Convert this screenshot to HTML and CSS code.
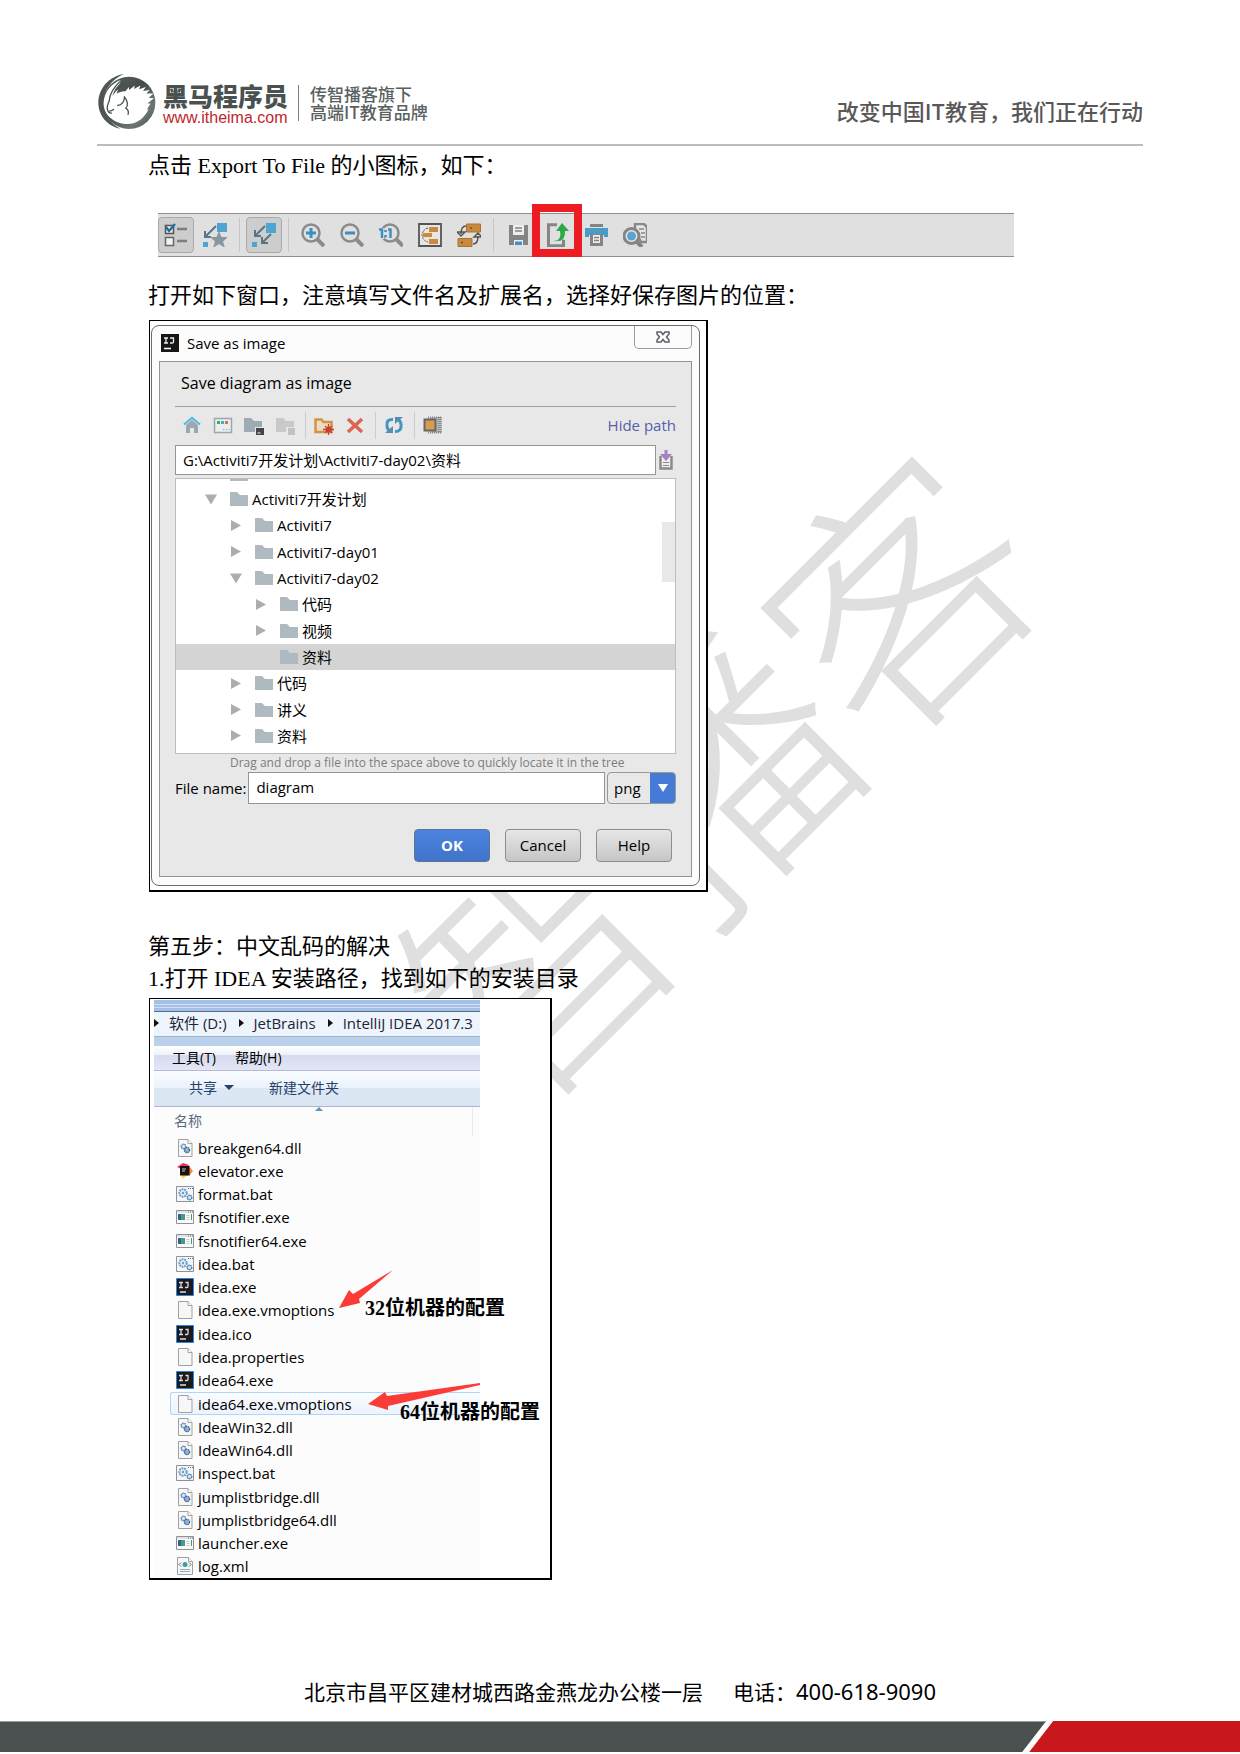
FILE: index.html
```html
<!DOCTYPE html>
<html lang="zh-CN">
<head>
<meta charset="utf-8">
<meta name="viewport" content="width=device-width, initial-scale=1">
<title>Activiti7 讲义</title>
<link rel="stylesheet" href="styles.css">
</head>
<body>
<svg class="sprite" aria-hidden="true">
  <symbol id="folder" viewBox="0 0 18 14"><path d="M0 0h7l3 3h8v11H0z" fill="#aeb9c0"/></symbol>
  <symbol id="right" viewBox="0 0 10 11"><path d="M0 0l10 5.500L0 11z" fill="#adadad"/></symbol>
  <symbol id="down" viewBox="0 0 12 10"><path d="M0 0h12L6 10z" fill="#adadad"/></symbol>
  <symbol id="f-page" viewBox="0 0 18 18"><path d="M2.500.5h9.500l4 4v13H2.500z" fill="#f7f7f7" stroke="#a0a0a0"/><path d="M12 .5v4h4" fill="#fff" stroke="#a0a0a0"/></symbol>
  <symbol id="f-dll" viewBox="0 0 18 18"><path d="M2.500.5h9.500l4 4v13H2.500z" fill="#f7f7f7" stroke="#a0a0a0"/><path d="M12 .5v4h4" fill="#fff" stroke="#a0a0a0"/><circle cx="7.500" cy="7.500" r="2.300" fill="#d5e6f5" stroke="#5b84ae" stroke-width="1.500" stroke-dasharray="1.500 .6"/><circle cx="11" cy="11" r="2.600" fill="#8fb3d6" stroke="#3e6b9c" stroke-width="1.300" stroke-dasharray="1.500 .6"/></symbol>
  <symbol id="f-bat" viewBox="0 0 18 18"><path d="M.5 1.500h17v15H.5z" fill="#f4f6f8" stroke="#8c9298"/><path d="M12 3.500h5" stroke="#666" stroke-dasharray="1 1"/><circle cx="7" cy="8" r="3.700" fill="#e4f0f8" stroke="#6d9cc4" stroke-width="2" stroke-dasharray="1.800 .8"/><circle cx="7" cy="8" r="1.200" fill="#6d9cc4"/><circle cx="13.500" cy="12.500" r="2.300" fill="#d3e6f5" stroke="#4878a8" stroke-width="1.400" stroke-dasharray="1.500 .6"/></symbol>
  <symbol id="f-app" viewBox="0 0 18 18"><path d="M.5 2.500h17v13H.5z" fill="#fafafa" stroke="#8c9298"/><path d="M1 4h16" stroke="#dfe4e8" stroke-width="2"/><path d="M12 4h5" stroke="#667" stroke-dasharray="1 1"/><path d="M2 6h7v6H2z" fill="#4a9a80"/><path d="M2 6h3v6H2z" fill="#35658f"/><path d="M10.500 7.500h3M10.500 9.500h3M10.500 11.500h3" stroke="#c5c9cc"/><path d="M15.500 6v6" stroke="#4a9a5a"/></symbol>
  <symbol id="f-ij" viewBox="0 0 18 18"><path d="M.5.5h17v17H.5z" fill="#1b1b1d" stroke="#2e83e6"/><path d="M3 4.500h4M3 9.500h4M5 4.500v5M9.500 4.500H12v4q0 1-1 1H9" fill="none" stroke="#ddd" stroke-width="1.300"/><path d="M4 14h6" stroke="#fff" stroke-width="1.300"/></symbol>
  <symbol id="f-elev" viewBox="0 0 18 18"><path d="M1 5l6-4 6 2-3 6z" fill="#ef2f5f"/><path d="M13 4l4 5-4 5z" fill="#f58a3c"/><path d="M5 10l7 3-6 4z" fill="#f6dc3a"/><path d="M4 4h9.500v9.500H4z" fill="#17110f"/><path d="M6 7h4M6 9h3" stroke="#c9c2bd"/></symbol>
  <symbol id="f-xml" viewBox="0 0 18 18"><path d="M1.500.5h11l4 4v13h-15z" fill="#f7f7f7" stroke="#a0a0a0"/><path d="M12.500.5v4h4" fill="#fff" stroke="#a0a0a0"/><circle cx="9" cy="7.500" r="2.500" fill="#3aa09e"/><path d="M5 5.500l-2 2 2 2M13 5.500l2 2-2 2" fill="none" stroke="#666"/><path d="M4 12.500h10M4 14.500h10" stroke="#9ab"/></symbol>
</svg>

<div class="page">
  <div class="watermark" aria-hidden="true">传智播客</div>

  <header class="page-header">
    <div class="brand">
      <svg class="brand-mark" viewBox="24 38 182 172" aria-hidden="true">
        <defs><linearGradient id="ring" x1="0" y1="0" x2="1" y2="1"><stop offset="0" stop-color="#5b6463"/><stop offset=".45" stop-color="#434b4b"/><stop offset=".75" stop-color="#6d7776"/><stop offset="1" stop-color="#444c4c"/></linearGradient></defs>
        <circle cx="120" cy="128" r="79" fill="url(#ring)"/>
        <path d="M104 41C60 48 27 84 27 128c0 40 30 72 66 78-30-16-50-44-50-78 0-40 24-70 61-87z" fill="#4d5655"/>
        <path d="M96 58C68 68 45 94 43 126c-2 34 26 62 66 66 34 2 58-18 70-46l-6 4c4-8 8-14 12-20l-10 0 20-16-16-1 15-13-22 0 10-11-20 3 8-12-20 7 4-11-19 10 2-10-17 13-1-9-10 13C88 92 74 104 68 118c-4 11-3 18-9 27-3 5 0 10 6 8M96 58C78 74 62 96 60 118c-1 10-6 20-7 26" fill="#fff"/>
        <path d="M97 60C74 80 61 98 60 122c-4 10-8 16-6 24 2 10 6 14 14 13M60 152c6 2 10-2 14-5M84 136c14-1 22-12 22-28M106 110c10 14 12 26 4 34 8 6 10 12 6 20" fill="none" stroke="#4a5352" stroke-width="4"/>
        <path d="M104 62C84 74 72 92 70 108c8-16 20-24 34-30z" fill="#4a5352"/>
      </svg>
      <div class="brand-text">
        <strong class="brand-name">黑马程序员</strong>
        <a class="brand-url" href="#">www.itheima.com</a>
      </div>
      <p class="brand-tag">传智播客旗下<br>高端IT教育品牌</p>
    </div>
    <p class="slogan">改变中国IT教育，我们正在行动</p>
  </header>

  <main class="content">
    <p>点击 Export To File 的小图标，如下：</p>

    <div class="diagram-bar" role="toolbar" aria-label="Diagram">
      <button class="tool pressed" type="button" aria-label="Categories"><svg viewBox="0 0 24 24"><path d="M1.500 2.500h8v8h-8z" fill="#e8e8e8" stroke="#555" stroke-width="1.500"/><path d="M2 4l3 4 6-7" fill="none" stroke="#1f6c9c" stroke-width="2.200"/><path d="M1.500 14.500h8v8h-8z" fill="#f2f2f2" stroke="#666" stroke-width="1.500"/><path d="M13 6h10M13 18h10" stroke="#7d7d7d" stroke-width="2.500"/></svg></button>
      <button class="tool" type="button" aria-label="Visibility"><svg viewBox="0 0 24 24"><path d="M14 0h10v9H14zM0 19h5v5H0z" fill="#4ea5cf"/><path d="M13 3L3 13M2 8v6h6" fill="none" stroke="#5b7488" stroke-width="2"/><path d="M16 8l2.500 6H25l-5 4.500 2 6.500-6-4-6 4 2-6.500L7 14h6.500z" fill="#8696a3"/></svg></button>
      <span class="tool-sep"></span>
      <button class="tool pressed" type="button" aria-label="Dependencies"><svg viewBox="0 0 24 24"><path d="M14 0h10v10H14zM0 19h5v5H0z" fill="#4ea5cf"/><path d="M13 3L4 12M3 7v6h6M19 11l-8 8M10 14v6h6" fill="none" stroke="#5b7488" stroke-width="2"/></svg></button>
      <span class="tool-sep"></span>
      <button class="tool" type="button" aria-label="Zoom in"><svg viewBox="0 0 24 24"><circle cx="10" cy="10" r="8.500" fill="none" stroke="#8b8b8b" stroke-width="2.500"/><path d="M16 16l7 7" stroke="#8b8b8b" stroke-width="4"/><path d="M10 5v10M5 10h10" stroke="#3c8fc0" stroke-width="3"/></svg></button>
      <button class="tool" type="button" aria-label="Zoom out"><svg viewBox="0 0 24 24"><circle cx="10" cy="10" r="8.500" fill="none" stroke="#8b8b8b" stroke-width="2.500"/><path d="M16 16l7 7" stroke="#8b8b8b" stroke-width="4"/><path d="M5 10h10" stroke="#3c8fc0" stroke-width="3"/></svg></button>
      <button class="tool" type="button" aria-label="Actual size"><svg viewBox="0 0 24 24"><circle cx="11" cy="10" r="8.500" fill="none" stroke="#8b8b8b" stroke-width="2.500"/><path d="M17 16l7 7" stroke="#8b8b8b" stroke-width="4"/><path d="M0 5h5v11H0zM6 5h8v11H6z" fill="#e0e0e0"/><path d="M0 6.500h3V15M9 6.500h2.500V15M6.500 7v2M6.500 12v2.500" fill="none" stroke="#3c8fc0" stroke-width="2.500"/></svg></button>
      <button class="tool" type="button" aria-label="Fit content"><svg viewBox="0 0 24 24"><path d="M1 1h22v22H1z" fill="#e6e6e6" stroke="#555" stroke-width="1.800"/><path d="M11 4h9v5h-9zM5 10h9v4H5zM11 16h9v5h-9z" fill="#c98a3c"/><path d="M10 5Q5 6 4 12q1 6 6 7" fill="none" stroke="#555" stroke-dasharray="2 1"/></svg></button>
      <button class="tool" type="button" aria-label="Apply layout"><svg viewBox="0 0 24 24"><path d="M9.500 1h14v8h-14zM1 15.500h14v8H1z" fill="#c98a3c" stroke="#a87434"/><path d="M9 3Q4 3 4 11M0 9h8l-4 4zM16 21q5 0 5-8M17 14h8l-4-4z" fill="none" stroke="#555" stroke-width="1.500"/><path d="M13 5h2M4 19.500h2" stroke="#555" stroke-width="1.500"/></svg></button>
      <span class="tool-sep"></span>
      <button class="tool" type="button" aria-label="Save"><svg viewBox="0 0 24 24"><path d="M3 2h19v20H3z" fill="#848484"/><path d="M7 2h11v10H7z" fill="#eee"/><path d="M9 5h7M9 8h7" stroke="#848484" stroke-width="1.500"/><path d="M8 17h9v5H8z" fill="#eee"/><path d="M9 18.500h7V22H9z" fill="#3f93c4"/></svg></button>
      <button class="tool marked" type="button" aria-label="Export to file"><svg viewBox="0 0 24 24"><path d="M12 1.800H3.500v21h15v-6" fill="none" stroke="#858585" stroke-width="3"/><path d="M8 18q9 0 7-10h-4l6-8 7 8h-4q1 12-12 10z" fill="#2fa84a"/></svg></button>
      <button class="tool" type="button" aria-label="Print"><svg viewBox="0 0 24 24"><path d="M6 1h13v3H6z" fill="#848484"/><path d="M1 5h23v9h-4v-2H5v2H1z" fill="#4a9cc8"/><path d="M6 11h13v12H6z" fill="#848484"/><path d="M9 12h7v8H9z" fill="#eee"/><path d="M10 14.500h5M10 17.500h5" stroke="#848484" stroke-width="1.500"/></svg></button>
      <button class="tool" type="button" aria-label="Print preview"><svg viewBox="0 0 24 24"><path d="M12 1h9l3 3v15h-6l-6-12z" fill="#e6e6e6" stroke="#888" stroke-width="2.500"/><path d="M16 6h5M18 10h4M18 14h4" stroke="#888" stroke-width="1.500"/><circle cx="8.500" cy="13" r="7.500" fill="#e6e6e6" stroke="#848484" stroke-width="3"/><circle cx="8.500" cy="13" r="4.500" fill="#5aa5cf"/><path d="M13 18l6 6" stroke="#848484" stroke-width="4"/></svg></button>
    </div>

    <p>打开如下窗口，注意填写文件名及扩展名，选择好保存图片的位置：</p>

    <figure class="shot shot-dialog">
      <form class="dialog">
        <div class="titlebar">
          <svg class="app-icon" viewBox="0 0 18 18" aria-hidden="true"><path d="M0 0h18v18H0z" fill="#161616"/><path d="M3 4h4M3 9h4M5 4v5M9 4h3.500v4q0 1-1.500 1H9" fill="none" stroke="#eee" stroke-width="1.300"/><path d="M3 14.500h7" stroke="#fff" stroke-width="1.500"/></svg>
          <h2>Save as image</h2>
          <button class="close" type="button" aria-label="Close"><svg viewBox="0 0 14 12"><path d="M1 1h4l2 2.500L9 1h4v2L10.500 6 13 9v2H9L7 8.500 5 11H1V9l2.500-3L1 3z" fill="#fff" stroke="#5c6068" stroke-width="1.500"/></svg></button>
        </div>
        <div class="panel">
          <h3>Save diagram as image</h3>
          <div class="file-bar">
            <button class="mini" type="button" aria-label="Home"><svg viewBox="0 0 20 20"><path d="M4 10l6-5 6 5v8h-4v-5H8v5H4z" fill="#9aa7b0"/><path d="M2 9.500L10 3l8 6.500" fill="none" stroke="#58b7dd" stroke-width="2.200"/></svg></button>
            <button class="mini" type="button" aria-label="Project"><svg viewBox="0 0 20 20"><path d="M1.500 3.500h17v14h-17z" fill="#e9eef1" stroke="#9aa7b0" stroke-width="1.500"/><path d="M4 6h3v3H4z" fill="#53a84f"/><path d="M8 6h3v3H8z" fill="#4ba6d3"/><path d="M12 6h3v3h-3z" fill="#df6a56"/><path d="M10 14.500h7" stroke="#9aa7b0" stroke-dasharray="1.500 1.500"/></svg></button>
            <button class="mini" type="button" aria-label="Module"><svg viewBox="0 0 20 20"><path d="M0 3h7l3 3h8v11H0z" fill="#9fabb3"/><path d="M11 12h9v8h-9z" fill="#e8e8e8"/><path d="M12 13h8v7h-8z" fill="#444"/><path d="M13.500 18h3" stroke="#fff"/></svg></button>
            <button class="mini" type="button" aria-label="Show"><svg viewBox="0 0 20 20"><path d="M1 3h7l3 3h8v11H1z" fill="#c9c9c9"/><path d="M11 12h9v8h-9z" fill="#e8e8e8"/><path d="M13 13h7v7h-7z" fill="#c2c2c2"/></svg></button>
            <span class="mini-sep"></span>
            <button class="mini" type="button" aria-label="New folder"><svg viewBox="0 0 20 20"><path d="M1.500 4.500h6l2 2.500h8v10h-16z" fill="#ecdcc4" stroke="#cf9447" stroke-width="2.500"/><circle cx="14.500" cy="14.500" r="3" fill="#c8412f"/><path d="M14.500 9v11M9 14.500h11M11 11l7 7M18 11l-7 7" stroke="#c8412f" stroke-width="1.300"/></svg></button>
            <button class="mini" type="button" aria-label="Delete"><svg viewBox="0 0 20 20"><path d="M3 4l14 13M17 4L3 17" stroke="#dd6453" stroke-width="3.500"/></svg></button>
            <span class="mini-sep"></span>
            <button class="mini" type="button" aria-label="Refresh"><svg viewBox="0 0 20 20"><path d="M9 4.500Q2 4 3 11q0 3 3 5M11 16.500q7 0 6-7 0-3-3-5" fill="none" stroke="#3f97c2" stroke-width="3"/><path d="M1 18h8v-7zM19 2h-8v7z" fill="#5a8db5"/></svg></button>
            <span class="mini-sep"></span>
            <button class="mini" type="button" aria-label="Hidden files"><svg viewBox="0 0 20 20"><path d="M7 2h12v16H7z" fill="#c2c2c2"/><path d="M5 2.500h14M5 17.500h14M17.500 2v16M15.500 2v16" stroke="#888" stroke-width="2" stroke-dasharray="1 1"/><path d="M1.500 4.500h11v11h-11z" fill="#d69d50" stroke="#666" stroke-width="2"/></svg></button>
            <a class="hide-path" href="#">Hide path</a>
          </div>
          <div class="path-row">
            <input class="field path" type="text" aria-label="Path" value="G:\Activiti7开发计划\Activiti7-day02\资料">
            <button class="history" type="button" aria-label="History"><svg viewBox="0 0 14 20"><path d="M1.500 6v12.500h11V6" fill="#eee" stroke="#8a8a8a" stroke-width="2.500"/><path d="M4 12.500h6M4 15.500h6" stroke="#8a8a8a"/><path d="M5.500 0h3v4H13l-6 7-6-7h4.500z" fill="#a87fc0"/></svg></button>
          </div>
          <div class="tree-box">
            <ul class="tree">
              <li class="l1"><svg class="down"><use href="#down"/></svg><svg class="folder"><use href="#folder"/></svg>Activiti7开发计划</li>
              <li class="l2"><svg class="right"><use href="#right"/></svg><svg class="folder"><use href="#folder"/></svg>Activiti7</li>
              <li class="l2"><svg class="right"><use href="#right"/></svg><svg class="folder"><use href="#folder"/></svg>Activiti7-day01</li>
              <li class="l2"><svg class="down"><use href="#down"/></svg><svg class="folder"><use href="#folder"/></svg>Activiti7-day02</li>
              <li class="l3"><svg class="right"><use href="#right"/></svg><svg class="folder"><use href="#folder"/></svg>代码</li>
              <li class="l3"><svg class="right"><use href="#right"/></svg><svg class="folder"><use href="#folder"/></svg>视频</li>
              <li class="l3 selected"><svg class="right"></svg><svg class="folder"><use href="#folder"/></svg>资料</li>
              <li class="l2"><svg class="right"><use href="#right"/></svg><svg class="folder"><use href="#folder"/></svg>代码</li>
              <li class="l2"><svg class="right"><use href="#right"/></svg><svg class="folder"><use href="#folder"/></svg>讲义</li>
              <li class="l2"><svg class="right"><use href="#right"/></svg><svg class="folder"><use href="#folder"/></svg>资料</li>
            </ul>
          </div>
          <p class="hint">Drag and drop a file into the space above to quickly locate it in the tree</p>
          <div class="name-row">
            <label for="file-name">File name:</label>
            <input class="field name" id="file-name" type="text" value="diagram">
            <span class="combo"><select aria-label="Format"><option>png</option></select></span>
          </div>
          <div class="actions">
            <button class="btn primary" type="button">OK</button>
            <button class="btn" type="button">Cancel</button>
            <button class="btn" type="button">Help</button>
          </div>
        </div>
      </form>
    </figure>

    <p class="step">第五步：中文乱码的解决</p>
    <p>1.打开 IDEA 安装路径，找到如下的安装目录</p>

    <figure class="shot shot-explorer">
      <div class="explorer">
        <div class="glass"></div>
        <nav class="crumbs" aria-label="Path"><i></i><a href="#">软件 (D:)</a><i></i><a href="#">JetBrains</a><i></i><a href="#">IntelliJ IDEA 2017.3</a></nav>
        <div class="glass-low"></div>
        <div class="menu"><button type="button">工具(T)</button><button type="button">帮助(H)</button></div>
        <div class="commands"><button class="share" type="button">共享</button><button type="button">新建文件夹</button></div>
        <div class="column-head">名称</div>
        <ul class="files">
          <li><svg><use href="#f-dll"/></svg>breakgen64.dll</li>
          <li><svg><use href="#f-elev"/></svg>elevator.exe</li>
          <li><svg><use href="#f-bat"/></svg>format.bat</li>
          <li><svg><use href="#f-app"/></svg>fsnotifier.exe</li>
          <li><svg><use href="#f-app"/></svg>fsnotifier64.exe</li>
          <li><svg><use href="#f-bat"/></svg>idea.bat</li>
          <li><svg><use href="#f-ij"/></svg>idea.exe</li>
          <li><svg><use href="#f-page"/></svg>idea.exe.vmoptions</li>
          <li><svg><use href="#f-ij"/></svg>idea.ico</li>
          <li><svg><use href="#f-page"/></svg>idea.properties</li>
          <li><svg><use href="#f-ij"/></svg>idea64.exe</li>
          <li class="hover"><svg><use href="#f-page"/></svg>idea64.exe.vmoptions</li>
          <li><svg><use href="#f-dll"/></svg>IdeaWin32.dll</li>
          <li><svg><use href="#f-dll"/></svg>IdeaWin64.dll</li>
          <li><svg><use href="#f-bat"/></svg>inspect.bat</li>
          <li><svg><use href="#f-dll"/></svg>jumplistbridge.dll</li>
          <li><svg><use href="#f-dll"/></svg>jumplistbridge64.dll</li>
          <li><svg><use href="#f-app"/></svg>launcher.exe</li>
          <li><svg><use href="#f-xml"/></svg>log.xml</li>
        </ul>
      </div>
      <svg class="arrows" viewBox="150 999 400 579" aria-hidden="true"><path d="M339 1308l10-18 4 4 40-24-34 29 1 4zM368 1404l17-12 2 4 93-13v2l-92 21v4z" fill="#fb3b36"/></svg>
      <strong class="note note-32">32位机器的配置</strong>
      <strong class="note note-64">64位机器的配置</strong>
    </figure>
  </main>

  <footer class="page-footer">
    <p><span>北京市昌平区建材城西路金燕龙办公楼一层</span><span>电话：<b>400-618-9090</b></span></p>
    <div class="stripe"><span class="stripe-grey"></span><span class="stripe-red"></span></div>
  </footer>
</div>
</body>
</html>
```
FILE: styles.css
```css
* { box-sizing: border-box; }

body {
  margin: 0;
  background: #fff;
  color: #000;
  font-family: "Liberation Serif", "Noto Sans CJK SC", serif;
  font-size: 22px;
  line-height: 32px;
}

p, h2, h3, ul, figure { margin: 0; padding: 0; }
ul { list-style: none; }
a { color: inherit; text-decoration: none; }
button, input, select { font: inherit; color: inherit; margin: 0; padding: 0; border: 0; background: none; border-radius: 0; }
svg { display: block; }
.sprite { position: absolute; width: 0; height: 0; }

.page {
  position: relative;
  z-index: 0;
  display: flex;
  flex-direction: column;
  min-height: 100vh;
  overflow: hidden;
}

.watermark {
  position: absolute;
  z-index: -1;
  top: 49%;
  left: 50%;
  transform: translate(-50%, -50%) rotate(-45deg);
  color: #dfdfdf;
  font-family: "Noto Sans CJK SC", sans-serif;
  font-weight: 300;
  font-size: 256px;
  line-height: 1;
  white-space: nowrap;
}

/* header */
.page-header {
  display: flex;
  justify-content: space-between;
  align-items: flex-end;
  margin: 0 97px;
  padding: 73px 0 14px;
  border-bottom: 2px solid #bcbcbc;
  font-family: "Noto Sans CJK SC", sans-serif;
}
.brand { display: flex; align-items: flex-end; }
.brand-mark { width: 61px; height: 57px; }
.brand-text { display: flex; flex-direction: column; margin-left: 5px; padding-bottom: 2px; }
.brand-name { color: #495251; font-size: 25px; font-weight: 900; line-height: 25px; }
.brand-url { color: #c0272d; font: 16px/20px "Liberation Sans", sans-serif; }
.brand-tag {
  margin: 0 0 9px 10px;
  padding-left: 11px;
  border-left: 1px solid #7d8483;
  color: #596160;
  font-size: 17px;
  font-weight: 500;
  line-height: 18px;
}
.slogan { padding-bottom: 5px; color: #595757; font-size: 22px; font-weight: 500; line-height: 30px; }

.content { padding: 4px 148px 0; }

/* diagram toolbar */
.diagram-bar {
  display: flex;
  align-items: center;
  gap: 3px;
  width: 856px;
  max-width: 100%;
  height: 44px;
  margin: 31px 0 23px 10px;
  border: solid #8e8e8e;
  border-width: 1px 0;
  background: #e0e0e0;
}
.tool { position: relative; display: grid; place-items: center; width: 36px; height: 36px; }
.tool svg { width: 24px; height: 24px; }
.tool.pressed { border: 1px solid #a9a9a9; border-radius: 4px; background: #cdcdcd; }
.tool-sep { width: 1px; height: 34px; margin: 0 3px; background: #c6c6c6; }
.tool.marked::after {
  content: "";
  position: absolute;
  inset: -13px -7px -4px;
  border: 8px solid #ed1c24;
}

/* figures */
.shot {
  position: relative;
  margin-left: 1px;
  max-width: 100%;
  border: solid #000;
  border-width: 1px 2px 2px 1px;
  background: #fff;
  font-family: "Open Sans", "Noto Sans CJK SC", sans-serif;
  font-size: 15px;
  line-height: 20px;
}
.shot-dialog { width: 559px; margin-top: 8px; padding: 4px 6px 4px 1px; }

/* save dialog */
.dialog { padding: 0 7px 8px; border: 1px solid #6c6c6c; border-radius: 8px; background: #fcfcfc; }
.titlebar { display: flex; align-items: center; height: 35px; padding-bottom: 2px; }
.app-icon { width: 18px; height: 18px; margin-left: 2px; }
.titlebar h2 { flex: 1; margin-left: 8px; font-size: 15px; font-weight: 400; }
.close {
  display: grid;
  place-items: center;
  align-self: flex-start;
  width: 58px;
  height: 23px;
  border: 1px solid #9c9c9c;
  border-top: 0;
  border-radius: 0 0 5px 5px;
}
.close svg { width: 14px; height: 12px; }
.panel { padding: 0 15px 14px; border: 1px solid #949494; background: #e8e8e8; }
.panel h3 {
  padding: 0 0 2px 6px;
  border-bottom: 1px solid #a0a0a0;
  font-size: 16px;
  font-weight: 400;
  line-height: 42px;
}
.file-bar { display: flex; align-items: center; gap: 11px; height: 38px; padding: 0 0 2px 7px; }
.mini, .mini svg { width: 20px; height: 20px; }
.mini-sep { width: 1px; height: 27px; margin: 0 -3px 0 -1px; background: #cdcdcd; }
.hide-path { margin-left: auto; color: #5560a8; }
.path-row { display: flex; align-items: center; gap: 3px; }
.field { flex: 1; min-width: 0; border: 1px solid #959595; background: #fff; }
.path { height: 30px; padding: 0 7px 2px; }
.history { width: 14px; height: 20px; margin-right: 3px; }
.history svg { width: 14px; height: 20px; }
.tree-box {
  position: relative;
  margin-top: 3px;
  padding: 7px 0 4px;
  border: 1px solid #bdbdbd;
  background: #fff;
}
.tree-box::before {
  content: "";
  position: absolute;
  top: 0;
  left: 54px;
  width: 18px;
  height: 2px;
  background: #aeb9c0;
}
.tree-box::after {
  content: "";
  position: absolute;
  top: 43px;
  right: 0;
  width: 13px;
  height: 60px;
  background: #e8e8e8;
}
.tree { display: grid; grid-auto-rows: 1fr; height: 263px; }
.tree li { display: flex; align-items: center; gap: 4px; }
.tree .l1 { padding-left: 29px; }
.tree .l2 { padding-left: 54px; }
.tree .l3 { padding-left: 79px; }
.tree .selected { background: #d4d4d4; }
.tree .right, .tree .down { width: 12px; height: 11px; }
.tree .folder { width: 18px; height: 14px; margin-left: 9px; }
.hint { padding-left: 55px; color: #7c7c7c; font-size: 12px; line-height: 18px; }
.name-row { display: flex; align-items: center; gap: 2px; height: 32px; }
.name { height: 32px; padding: 0 7px 2px; }
.combo { position: relative; width: 69px; height: 32px; }
.combo select {
  appearance: none;
  width: 100%;
  height: 100%;
  padding-left: 6px;
  border: 1px solid #9a9a9a;
  border-radius: 4px;
  background: linear-gradient(to left, #457bd6 25px, #e8e8e8 25px);
}
.combo::after {
  content: "";
  position: absolute;
  top: 12px;
  right: 8px;
  border: 5px solid transparent;
  border-top: 8px solid #fff;
  border-bottom: 0;
  pointer-events: none;
}
.actions { display: flex; justify-content: flex-end; gap: 15px; margin: 25px 4px 0 0; }
.btn {
  width: 76px;
  height: 33px;
  padding-bottom: 2px;
  border: 1px solid #8d8d8d;
  border-radius: 4px;
  background: linear-gradient(#e6e6e6, #c6c6c6);
}
.btn.primary { border-color: #5f7396; background: linear-gradient(#4a84e0, #4173c9); color: #fff; font-weight: 700; }

.step { margin-top: 39px; }

/* explorer window */
.shot-explorer { width: 403px; margin-top: 3px; padding: 1px 0 0 4px; }
.explorer { width: 326px; background: #fcfcfc; font-size: 14px; }
.glass {
  height: 12px;
  border-bottom: 1px solid #5d6b80;
  background: linear-gradient(#a3c0e9 4px, #d2e0f3 4px 5px, #a3c0e9 5px 7px, #d2e0f3 7px 8px, #a3c0e9 8px);
}
.crumbs { display: flex; align-items: center; height: 25px; padding-bottom: 2px; border-bottom: 1px solid #9fb2c8; background: #edf4fc; color: #1b2536; font-size: 15px; white-space: nowrap; }
.crumbs i { border: 4px solid transparent; border-left: 5px solid #111; border-right: 0; margin-right: 10px; }
.crumbs a + i { margin-left: 12px; }
.glass-low { height: 9px; background: #b9d1ea; }
.menu {
  display: flex;
  gap: 19px;
  height: 25px;
  padding-left: 18px;
  border-bottom: 1px solid #b5bad2;
  background: linear-gradient(#fff, #eef1f9 9px, #d5daee 9px, #e4e6f6);
}
.commands {
  display: flex;
  gap: 35px;
  height: 36px;
  padding: 0 0 2px 35px;
  border-bottom: 1px solid #a9b9cc;
  background: linear-gradient(#fafdff, #eaf2fb 17px, #dde7f4 17px, #dae6f4);
  color: #24406b;
}
.share { display: flex; align-items: center; gap: 7px; }
.share::after { content: ""; border: 5px solid transparent; border-top-color: #24406b; border-bottom: 0; }
.column-head {
  position: relative;
  height: 29px;
  padding-left: 20px;
  margin-right: 7px;
  border-right: 1px solid #e2ecf6;
  color: #5a6a80;
  line-height: 28px;
}
.column-head::after {
  content: "";
  position: absolute;
  top: 0;
  left: 161px;
  border: 4px solid transparent;
  border-top: 0;
  border-bottom-color: #5f93b8;
}
.files { display: grid; grid-auto-rows: 1fr; height: 442px; font-size: 15px; }
.files li { display: flex; align-items: center; gap: 4px; margin-left: 16px; padding-left: 5px; border: 1px solid transparent; border-right: 0; }
.files svg { width: 18px; height: 18px; }
.files .hover { border-color: #b2d4f5; border-radius: 3px 0 0 3px; background: linear-gradient(#fafcff, #ebf3fd); }
.arrows { position: absolute; top: 0; left: 0; width: 400px; height: 579px; }
.note { position: absolute; font: 700 20px/24px "Liberation Serif", "Noto Sans CJK SC", serif; white-space: nowrap; }
.note-32 { top: 297px; left: 215px; }
.note-64 { top: 401px; left: 250px; }

/* footer */
.page-footer { margin-top: auto; padding: 90px 0 2px; font-family: "Noto Sans CJK SC", sans-serif; font-size: 21px; }
.page-footer p { display: flex; justify-content: center; flex-wrap: wrap; gap: 0 30px; margin-bottom: 14px; }
.page-footer b { font: 400 22px/30px "Noto Sans", sans-serif; }
.stripe { display: flex; height: 31px; }
.stripe-grey { flex: 1; border-top: 1px solid #8fa09a; background: #4a5150; clip-path: polygon(0 0, 100% 0, calc(100% - 24px) 100%, 0 100%); }
.stripe-red { width: 17%; margin-left: -17px; background: #c9181b; clip-path: polygon(24px 0, 100% 0, 100% 100%, 0 100%); }
```
